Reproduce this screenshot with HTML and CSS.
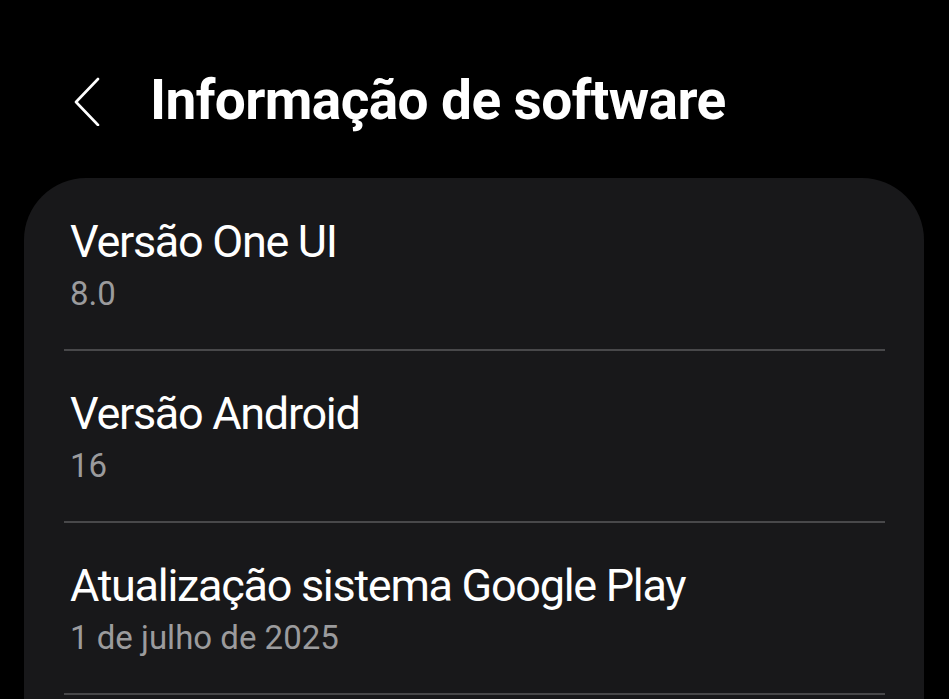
FILE: index.html
```html
<!DOCTYPE html>
<html lang="pt">
<head>
<meta charset="utf-8">
<link rel="stylesheet" href="styles.css">
</head>
<body>
<header class="top">
  <button class="back" aria-label="Voltar">
    <svg width="28" height="50" viewBox="0 0 28 50"><path d="M25 3 L3 26 L25 49" fill="none" stroke="#fff" stroke-width="2.6" stroke-linecap="round" stroke-linejoin="round"/></svg>
  </button>
  <h1 class="title">Informação de software</h1>
</header>
<main class="card">
  <div class="row">
    <div class="row-title">Versão One UI</div>
    <div class="row-sub">8.0</div>
  </div>
  <div class="row">
    <div class="row-title">Versão Android</div>
    <div class="row-sub">16</div>
  </div>
  <div class="row">
    <div class="row-title">Atualização sistema Google Play</div>
    <div class="row-sub">1 de julho de 2025</div>
  </div>
</main>
</body>
</html>
```
FILE: styles.css
```css
html, body {
  margin: 0;
  background: #000;
  height: 100%;
  overflow: hidden;
}
body {
  font-family: Roboto, "Noto Sans", sans-serif;
  color: #fff;
}
.top {
  display: flex;
  align-items: center;
  height: 178px;
  padding-left: 73px;
  box-sizing: border-box;
  padding-bottom: 0;
}
.back {
  background: none;
  border: 0;
  padding: 0;
  margin: 0;
  width: 28px;
  height: 50px;
  display: flex;
  margin-top: 24px;
}
.title {
  margin: 22px 0 0 49px;
  font-size: 55px;
  font-weight: 700;
  letter-spacing: -0.6px;
}
.card {
  margin: 0 25px 0 24px;
  background: #18181a;
  border-radius: 62px 62px 0 0;
  padding: 1px 39px 0 40px;
  min-height: 520px;
}
.row {
  height: 172px;
  box-sizing: border-box;
  border-bottom: 2px solid #48484a;
  padding: 36px 0 0 6px;
}
.row-title {
  font-size: 45px;
  line-height: 54px;
  letter-spacing: -1.3px;
}
.row-sub {
  font-size: 33px;
  line-height: 40px;
  color: #9b9b9d;
  margin-top: 5px;
}
```
